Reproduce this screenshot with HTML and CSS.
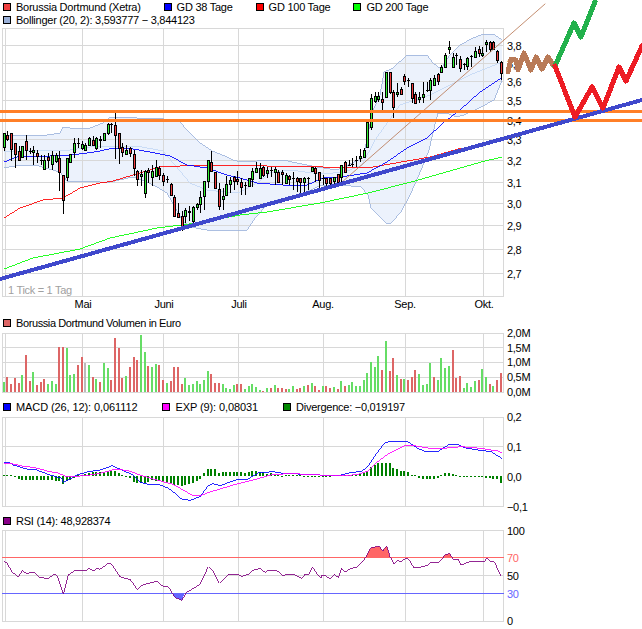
FILE: index.html
```html
<!DOCTYPE html>
<html lang="de">
<head>
  <meta charset="UTF-8">
  <title>Borussia Dortmund Chart</title>
  <link rel="stylesheet" href="styles.css">
</head>
<body>

  <!-- Price panel -->
  <section class="panel panel-price">
    <div class="legend legend-price">
      <span class="legend-item"><i class="swatch sw-price"></i>Borussia Dortmund (Xetra)</span>
      <span class="legend-item"><i class="swatch sw-blue"></i>GD 38 Tage</span>
      <span class="legend-item"><i class="swatch sw-red"></i>GD 100 Tage</span>
      <span class="legend-item"><i class="swatch sw-green"></i>GD 200 Tage</span>
    </div>
    <div class="legend">
      <span class="legend-item"><i class="swatch sw-boll"></i>Bollinger (20, 2): 3,593777 − 3,844123</span>
    </div>
    <svg class="plot plot-price" id="price" viewBox="0 26 642 290">
      <g class="labels">
        <text x="507" y="50">3,8</text>
        <text x="507" y="68">3,7</text>
        <text x="507" y="86">3,6</text>
        <text x="507" y="105">3,5</text>
        <text x="507" y="125">3,4</text>
        <text x="507" y="144">3,3</text>
        <text x="507" y="165">3,2</text>
        <text x="507" y="187">3,1</text>
        <text x="507" y="208">3,0</text>
        <text x="507" y="230">2,9</text>
        <text x="507" y="254">2,8</text>
        <text x="507" y="278">2,7</text>
      </g>
      <g class="labels months">
        <text x="83" y="308">Mai</text>
        <text x="164" y="308">Juni</text>
        <text x="239" y="308">Juli</text>
        <text x="323" y="308">Aug.</text>
        <text x="405" y="308">Sep.</text>
        <text x="484" y="308">Okt.</text>
      </g>
      <text class="tick-note" x="8" y="294">1 Tick = 1 Tag</text>
    </svg>

    <!-- hand drawn trend lines on top of the chart -->
    <svg class="drawing" viewBox="0 0 642 316">
      <polyline class="ink ink-thin" points="341,183 545,4"/>
      <polyline class="ink ink-orange" points="0,111 642,111"/>
      <polyline class="ink ink-orange" points="0,120 642,120"/>
      <polyline class="ink ink-indigo" points="0,279 642,100"/>
      <polyline class="ink ink-brown" points="508,72 511,59 516,60 518,70 524,53 531,70 536,57 542,69 548,57 553,65"/>
      <polyline class="ink ink-green" points="555,66 574,23 581,37 595,2"/>
      <polyline class="ink ink-red" points="555,66 575,117 592,87 603,108 619,67 626,81 642,46"/>
    </svg>
  </section>

  <!-- Volume panel -->
  <section class="panel">
    <div class="legend legend-tall">
      <span class="legend-item narrow"><i class="swatch sw-vol"></i>Borussia Dortmund Volumen in Euro</span>
    </div>
    <svg class="plot plot-volume" id="volume" viewBox="0 330 642 70">
      <g class="labels">
        <text x="507" y="337">2,0M</text>
        <text x="507" y="352">1,5M</text>
        <text x="507" y="366">1,0M</text>
        <text x="507" y="381">0,5M</text>
        <text x="507" y="396">0,0M</text>
      </g>
    </svg>
  </section>

  <!-- MACD panel -->
  <section class="panel">
    <div class="legend legend-tall">
      <span class="legend-item spaced"><i class="swatch sw-blue"></i>MACD (26, 12): 0,061112</span>
      <span class="legend-item spaced"><i class="swatch sw-pink"></i>EXP (9): 0,08031</span>
      <span class="legend-item"><i class="swatch sw-div"></i>Divergence: −0,019197</span>
    </div>
    <svg class="plot plot-macd" id="macd" viewBox="0 414 642 100">
      <g class="labels">
        <text x="507" y="421">0,2</text>
        <text x="507" y="451">0,1</text>
        <text x="507" y="481">0,0</text>
        <text x="507" y="511">−0,1</text>
      </g>
    </svg>
  </section>

  <!-- RSI panel -->
  <section class="panel">
    <div class="legend legend-tall">
      <span class="legend-item"><i class="swatch sw-rsi"></i>RSI (14): 48,928374</span>
    </div>
    <svg class="plot plot-rsi" id="rsi" viewBox="0 528 642 101">
      <g class="labels">
        <text x="507" y="535">100</text>
        <text class="label-over" x="507" y="562">70</text>
        <text x="507" y="580">50</text>
        <text class="label-under" x="507" y="598">30</text>
        <text x="507" y="625">0</text>
      </g>
    </svg>
  </section>

  <script src="chart.js"></script>
</body>
</html>
```
FILE: styles.css
```css
body {
  margin: 0;
  width: 642px;
  height: 629px;
  overflow: hidden;
  background-color: #fff;
  font-family: "Liberation Sans", Arial, sans-serif;
  font-size: 11px;
  color: #000;
}

.panel {
  display: flex;
  flex-direction: column;
}

.panel-price {
  position: relative;
}

/* Legends */
.legend {
  display: flex;
  align-items: center;
  gap: 25px;
  height: 13px;
  padding-left: 3px;
  white-space: nowrap;
  letter-spacing: -0.25px;
}

.legend-price {
  gap: 23px;
}

.legend-tall {
  height: 14px;
}

.legend-item {
  display: flex;
  align-items: center;
}

.spaced { letter-spacing: -0.1px; }
.narrow { letter-spacing: -0.4px; }

.swatch {
  width: 8px;
  height: 8px;
  margin-right: 5px;
  box-sizing: border-box;
  border: 1px solid #000;
}

.sw-price { background-color: #f04040; }
.sw-blue { background-color: #00f; }
.sw-red { background-color: #f00; }
.sw-green { background-color: #0f0; }
.sw-boll { background-color: #9ab0d8; }
.sw-vol { background-color: #dd6666; }
.sw-pink { background-color: #f0f; }
.sw-div { background-color: #080; }
.sw-rsi { background-color: #808; }

/* Plots */
.plot {
  display: block;
  width: 642px;
  font-size: 11px;
  letter-spacing: -0.3px;
  overflow: visible;
}

.plot-price { height: 290px; }
.plot-volume { height: 70px; }
.plot-macd { height: 100px; }
.plot-rsi { height: 101px; }

.months text { text-anchor: middle; }

.tick-note { fill: #a0a0a0; }
.label-over { fill: #ff6666; }
.label-under { fill: #6666ff; }

.grid { stroke: #d8d8d8; stroke-width: 1; shape-rendering: crispEdges; }
.line { fill: none; stroke-width: 0.85; shape-rendering: crispEdges; }
.shape { shape-rendering: crispEdges; }

.band { fill: #ecf2fc; stroke: none; }
.band-edge { stroke: #9db4dc; }
.line-mid { stroke: #c4d8f4; }
.line-38 { stroke: #00f; }
.line-100 { stroke: #f00; }
.line-200 { stroke: #0f0; }
.line-exp { stroke: #f0f; }
.line-rsi { stroke: #800080; }
.line-over { stroke: #ff6666; }
.line-under { stroke: #6666ff; }

.wick { stroke: #000; }
.body { stroke: #000; stroke-width: 1; }
.body-r { fill: #f03c3c; }
.body-g { fill: #33ee33; }
.vol-r { fill: #dd6666; }
.vol-g { fill: #66dd66; }
.vol-x { fill: #bbbbbb; }
.bar-div { fill: #008000; }
.fill-over { fill: #ff6666; }
.fill-under { fill: #6666ff; }

/* Trend lines drawn over the chart */
.drawing {
  position: absolute;
  top: 0;
  left: 0;
  width: 642px;
  height: 316px;
}

.ink {
  fill: none;
  stroke-linejoin: round;
  stroke-linecap: round;
  shape-rendering: crispEdges;
}

.ink-thin { stroke: #b97a57; stroke-width: 0.85; }
.ink-orange { stroke: #ff7f27; stroke-width: 3; stroke-linecap: butt; }
.ink-indigo { stroke: #3f48cc; stroke-width: 4; stroke-linecap: butt; }
.ink-brown { stroke: #b97a57; stroke-width: 5; }
.ink-green { stroke: #22b14c; stroke-width: 5; }
.ink-red { stroke: #ed1c24; stroke-width: 5; }
```
FILE: chart.js
```js
// chart values were read off the picture, most of them in 3x pixels
const thirds = (ox, oy, pts) => pts.map(([x, y]) => [ox + x / 3, oy + y / 3]);
const dayX = (i) => Math.round(3.67 + 3.71 * i);
const months = [5, 82, 163, 238, 323, 405, 483];
const LEFT = 2, RIGHT = 503;

function gridLines(rows, top, bottom) {
  let out = '';
  rows.forEach(y => { out += `<line class="grid" x1="${LEFT}" x2="${RIGHT + 1}" y1="${y + .5}" y2="${y + .5}"/>`; });
  [LEFT, RIGHT].concat(months).forEach(x => {
    out += `<line class="grid" x1="${x + .5}" x2="${x + .5}" y1="${top}" y2="${bottom + 1}"/>`;
  });
  return out;
}

function line(cls, pts) {
  return `<polyline class="line ${cls}" points="${pts.map(p => p.join(',')).join(' ')}"/>`;
}

function area(cls, pts) {
  return `<polygon class="shape ${cls}" points="${pts.map(p => p.join(',')).join(' ')}"/>`;
}

function draw(id, markup) {
  document.getElementById(id).insertAdjacentHTML('afterbegin', markup);
}

/* Price panel */
const upperBand = [[4,135],[20,135],[33,136],[47,135],[60,133],[63,127],[77,129],[90,128],[103,123],[110,117],[135,117],[137,118],[158,118],[180,122],[187,130],[200,143],[212,151],[227,157],[233,160],[240,162],[257,161],[283,160],[297,163],[317,167],[337,170],[363,158],[368,135],[372,112],[380,95],[384,72],[393,68],[407,55],[427,55],[433,63],[441,69],[449,56],[460,45],[473,38],[483,34],[493,34],[502,40]];
const lowerBand = [[4,168],[20,165],[35,165],[60,172],[67,181],[100,182],[110,182],[133,177],[147,182],[157,187],[167,193],[175,207],[182,220],[190,227],[207,230],[247,230],[255,218],[267,205],[277,200],[300,195],[321,185],[341,185],[361,187],[368,195],[371,208],[381,218],[386,223],[391,223],[401,212],[411,193],[421,170],[429,150],[436,120],[438,113],[446,113],[456,117],[464,115],[481,107],[494,100],[502,80]];
const midLine = [[4,152],[40,150],[70,150],[90,147],[110,146],[137,146],[163,151],[180,171],[190,183],[207,190],[225,192],[240,192],[257,183],[270,173],[290,170],[320,174],[345,172],[362,165],[375,140],[400,105],[430,95],[470,75],[502,62]];
const gd38 = [[4,162],[17,157],[33,156],[50,156],[70,155],[87,153],[100,151],[113,148],[133,149],[150,152],[170,156],[187,165],[207,168],[227,175],[240,178],[257,183],[283,185],[307,185],[323,178],[340,177],[367,173],[387,162],[407,148],[427,138],[443,123],[460,110],[480,92],[501,78]];
const gd100 = [[4,218],[20,208],[43,200],[63,198],[80,188],[100,183],[113,181],[133,175],[160,167],[180,166],[207,165],[267,166],[323,167],[340,168],[373,167],[407,161],[430,157],[462,148]];
const gd200 = [[4,269],[33,258],[80,249],[110,238],[157,228],[197,223],[240,215],[267,212],[320,203],[368,193],[411,182],[481,162],[502,157]];

// [body top, body bottom, high, low, colour]
const candles = [
  [133,147,133,151,'g'],[135,139,131,141,'r'],[133,149,133,161,'r'],[143,154,143,168,'r'],[151,160,146,160,'r'],
  [146,157,146,157,'g'],[141,150,135,160,'r'],[151,152,148,154,'d'],[150,152,146,165,'g'],[153,156,150,163,'r'],
  [160,160,155,165,'d'],[160,169,155,169,'g'],[157,160,153,168,'r'],[155,164,151,170,'g'],[155,161,153,163,'g'],
  [158,172,151,191,'r'],[175,200,175,214,'r'],[158,177,158,181,'g'],[154,162,154,162,'g'],[143,152,138,158,'g'],
  [143,144,138,148,'d'],[144,148,141,150,'g'],[145,150,143,151,'g'],[138,145,137,146,'g'],[140,145,136,146,'r'],
  [138,148,137,150,'g'],[139,140,136,148,'r'],[133,140,133,140,'g'],[124,133,123,135,'g'],[124,125,123,133,'d'],
  [125,135,113,159,'r'],[133,148,133,164,'r'],[147,152,143,157,'r'],[150,154,145,155,'g'],[148,153,147,157,'r'],
  [154,168,150,176,'r'],[171,179,170,186,'r'],[174,176,170,186,'g'],[171,193,170,198,'g'],[170,172,168,183,'r'],
  [171,177,165,186,'g'],[167,176,160,176,'g'],[168,175,166,180,'r'],[175,181,173,186,'r'],[179,180,176,183,'d'],
  [184,195,183,196,'r'],[197,216,195,217,'r'],[213,217,203,217,'r'],[216,228,211,231,'r'],[210,216,208,223,'g'],
  [211,212,206,221,'g'],[207,221,206,223,'g'],[204,207,203,210,'g'],[197,204,191,213,'g'],[181,196,181,210,'g'],
  [160,181,160,188,'g'],[162,171,151,171,'r'],[172,188,172,188,'r'],[189,206,183,210,'r'],[196,199,188,210,'g'],
  [184,195,176,195,'g'],[180,184,177,193,'g'],[177,181,176,190,'r'],[179,181,171,185,'r'],[182,187,178,195,'r'],
  [185,186,182,195,'d'],[178,186,178,187,'g'],[171,179,168,187,'g'],[168,172,162,172,'g'],[168,178,163,178,'g'],
  [167,175,166,177,'r'],[170,173,167,178,'g'],[170,171,167,177,'d'],[169,172,167,185,'g'],[172,182,170,183,'r'],
  [172,174,170,185,'r'],[175,183,173,183,'g'],[176,179,175,185,'r'],[178,179,172,190,'d'],[178,181,177,192,'r'],
  [178,182,178,195,'r'],[178,182,177,192,'g'],[178,179,177,190,'d'],[167,171,167,171,'g'],[168,173,167,182,'r'],
  [172,180,172,190,'r'],[178,179,175,185,'d'],[178,183,178,190,'r'],[178,183,178,186,'r'],[177,181,177,186,'g'],
  [174,182,174,186,'r'],[165,177,165,184,'g'],[162,172,161,173,'r'],[165,166,160,166,'d'],[164,165,158,167,'d'],
  [160,161,156,167,'d'],[156,158,149,162,'g'],[150,157,148,158,'g'],[122,147,122,148,'g'],[98,127,94,130,'g'],
  [96,101,92,103,'g'],[96,99,92,102,'g'],[99,102,92,110,'r'],[72,97,72,97,'g'],[72,92,72,94,'r'],
  [92,107,90,118,'r'],[92,94,83,97,'g'],[89,94,87,95,'r'],[76,81,74,85,'r'],[80,82,78,87,'d'],
  [83,98,83,103,'r'],[94,103,92,104,'r'],[97,99,92,103,'g'],[94,97,82,103,'g'],[90,91,82,92,'d'],
  [80,90,78,100,'g'],[78,85,75,85,'g'],[74,81,73,85,'r'],[67,72,65,73,'g'],[55,67,53,68,'g'],
  [47,49,41,54,'g'],[57,67,53,68,'g'],[55,56,53,65,'d'],[59,68,56,72,'r'],[64,65,63,70,'d'],
  [58,66,57,70,'g'],[56,58,55,67,'d'],[51,57,47,57,'g'],[49,53,46,57,'r'],[53,55,47,57,'g'],
  [42,44,40,52,'g'],[42,49,41,52,'r'],[42,49,41,50,'r'],[51,60,50,63,'r'],[62,73,61,80,'r']
];

function candle([top, bottom, high, low, colour], i) {
  const x = dayX(i);
  let out = `<line class="wick shape" x1="${x + .5}" x2="${x + .5}" y1="${high}" y2="${low}"/>`;
  if (colour === 'd') {
    out += `<line class="wick shape" x1="${x - 1}" x2="${x + 2}" y1="${top + .5}" y2="${top + .5}"/>`;
  } else {
    out += `<rect class="body shape body-${colour}" x="${x - .5}" y="${top + .5}" width="2" height="${bottom - top}"/>`;
  }
  return out;
}

draw('price',
  area('band', upperBand.concat(lowerBand.slice().reverse())) +
  gridLines([45, 63, 81, 100, 120, 139, 160, 182, 203, 225, 249, 273, 28, 296], 28, 296) +
  line('band-edge', upperBand) + line('band-edge', lowerBand) + line('line-mid', midLine) +
  line('line-200', gd200) + line('line-100', gd100) + line('line-38', gd38) +
  candles.map(candle).join(''));

/* Volume panel, heights in thirds of a pixel */
const volume = [30,45,24,42,27,51,111,33,60,21,30,39,24,33,24,135,135,132,51,54,81,105,87,81,45,39,30,87,72,36,162,132,42,48,75,105,96,171,120,78,75,84,81,36,27,33,75,75,24,42,21,24,33,24,36,63,54,27,27,24,12,9,21,24,24,9,18,24,15,6,3,12,12,21,12,12,9,9,18,9,12,18,21,27,18,6,18,18,12,15,9,33,18,21,30,18,18,36,57,90,75,108,66,153,63,102,51,39,39,36,45,66,54,21,24,87,45,36,102,72,78,126,42,48,12,27,15,33,36,69,45,24,18,36,57];
const volumeKind = 'grrrrgrrgr' + 'rrgggrrggg' + 'rrxgrgrggr' + 'rrrgrrrggr' + 'ggrrgrrrrg' + 'ggggggrrrg' + 'gggrrggggg' + 'rgrgrrrggr' + 'rgrgrrgrrg' + 'rgrggggggg' + 'ggrgrrgrgr' + 'rrggggrggg' + 'grrrggggrg' + 'grgrr';

draw('volume',
  gridLines([333, 347, 362, 377, 392], 333, 392) +
  volume.map((h, i) => {
    const px = Math.round(h / 3);
    return `<rect class="shape vol-${volumeKind[i]}" x="${dayX(i) - 1}" y="${392 - px}" width="2" height="${px}"/>`;
  }).join(''));

/* MACD panel */
const macdLine = thirds(0, 395, [[12,202],[28,202],[40,210],[80,222],[110,225],[150,240],[185,250],[190,262],[205,255],[230,240],[265,230],[300,225],[337,212],[365,225],[400,240],[420,262],[445,268],[475,268],[505,280],[525,295],[545,312],[570,316],[600,305],[625,272],[640,266],[660,272],[710,254],[740,254],[775,234],[820,230],[850,235],[960,240]])
  .concat(thirds(321, 395, [[0,240],[50,243],[90,232],[120,230],[140,215],[160,185],[190,145],[205,140],[260,140],[290,160],[315,170],[350,170],[385,148],[410,148],[430,158],[470,165],[510,170],[542,190]]));
const expLine = thirds(0, 395, [[12,205],[40,207],[70,214],[100,217],[150,230],[170,233],[200,245],[260,242],[300,235],[345,223],[380,226],[430,243],[470,255],[520,268],[575,300],[605,300],[640,288],[700,270],[760,255],[820,238],[880,236],[960,240]])
  .concat(thirds(321, 395, [[0,240],[70,243],[110,238],[140,228],[170,200],[200,178],[250,152],[280,152],[340,162],[390,158],[420,155],[480,160],[530,168],[542,173]]));
const divergence = [1,1,1,-2,-8,-12,-12,-12,-13,-13,-13,-13,-13,-13,-14,-14,-25,-14,-12,-5,2,3,6,10,12,12,12,12,15,16,14,8,2,-4,-6,-18,-22,-22,-22,-18,-12,-16,-16,-18,-20,-22,-26,-26,-30,-28,-24,-20,-15,-8,8,20,22,20,10,12,12,12,12,12,12,10,12,16,16,12,12,6,10,4,4,-1,2,2,2,2,1,-4,-4,-2,-2,-1,-2,-4,-4,2,1,1,3,3,4,4,5,8,14,28,32,38,38,40,38,24,20,15,15,13,3,1,-6,-10,-10,-8,-8,-6,3,8,8,6,2,-3,-4,-4,-4,-4,-4,-4,-6,-6,-8,-10,-20];

draw('macd',
  gridLines([417, 446, 506], 417, 506) +
  divergence.map((d, i) => {
    const h = Math.max(1, Math.round(Math.abs(d) / 3));
    return `<rect class="shape bar-div" x="${dayX(i) - 1}" y="${d > 0 ? 476 - h : 476}" width="2" height="${h}"/>`;
  }).join('') +
  line('line-38', macdLine) + line('line-exp', expLine));

/* RSI panel */
const rsiLine = thirds(0, 505, [[12,168],[22,175],[35,200],[55,216],[67,196],[78,205],[103,202],[120,218],[145,220],[165,207],[172,213],[190,268],[205,210],[225,196],[260,196],[268,190],[280,198],[290,190],[300,193],[325,175],[335,178],[360,215],[375,220],[390,223],[412,253],[430,238],[445,236],[470,228],[490,245],[505,245],[525,277],[545,286],[560,262],[580,250],[600,238],[625,185],[640,200],[658,235],[685,208],[715,208],[725,214],[745,208],[760,196],[780,190],[795,202],[805,196],[830,196],[848,212],[860,208],[880,208],[905,220],[915,208],[925,210],[937,186],[955,212],[963,218]])
  .concat(thirds(321, 505, [[0,212],[15,213],[28,223],[40,208],[52,218],[62,190],[72,202],[90,190],[105,188],[125,170],[135,155],[150,128],[175,124],[185,138],[197,122],[207,155],[220,178],[230,165],[240,172],[255,158],[265,165],[278,188],[295,188],[320,180],[330,172],[355,172],[372,150],[385,145],[397,162],[412,162],[420,180],[450,168],[465,168],[490,170],[497,158],[508,168],[520,170],[540,214]]));
const overA = thirds(321, 505, [[133,157],[135,155],[150,128],[175,124],[185,138],[197,122],[207,157]]);
const overB = thirds(321, 505, [[362,157],[372,150],[385,145],[393,157]]);
const under = thirds(0, 505, [[515,265],[525,277],[545,286],[555,265]]);

draw('rsi',
  gridLines([530, 575, 621], 530, 621) +
  `<line class="shape line-over" x1="2" x2="504" y1="557.5" y2="557.5"/>` +
  `<line class="shape line-under" x1="2" x2="504" y1="593.5" y2="593.5"/>` +
  area('fill-over', overA) + area('fill-over', overB) + area('fill-under', under) +
  line('line-rsi', rsiLine));
```
